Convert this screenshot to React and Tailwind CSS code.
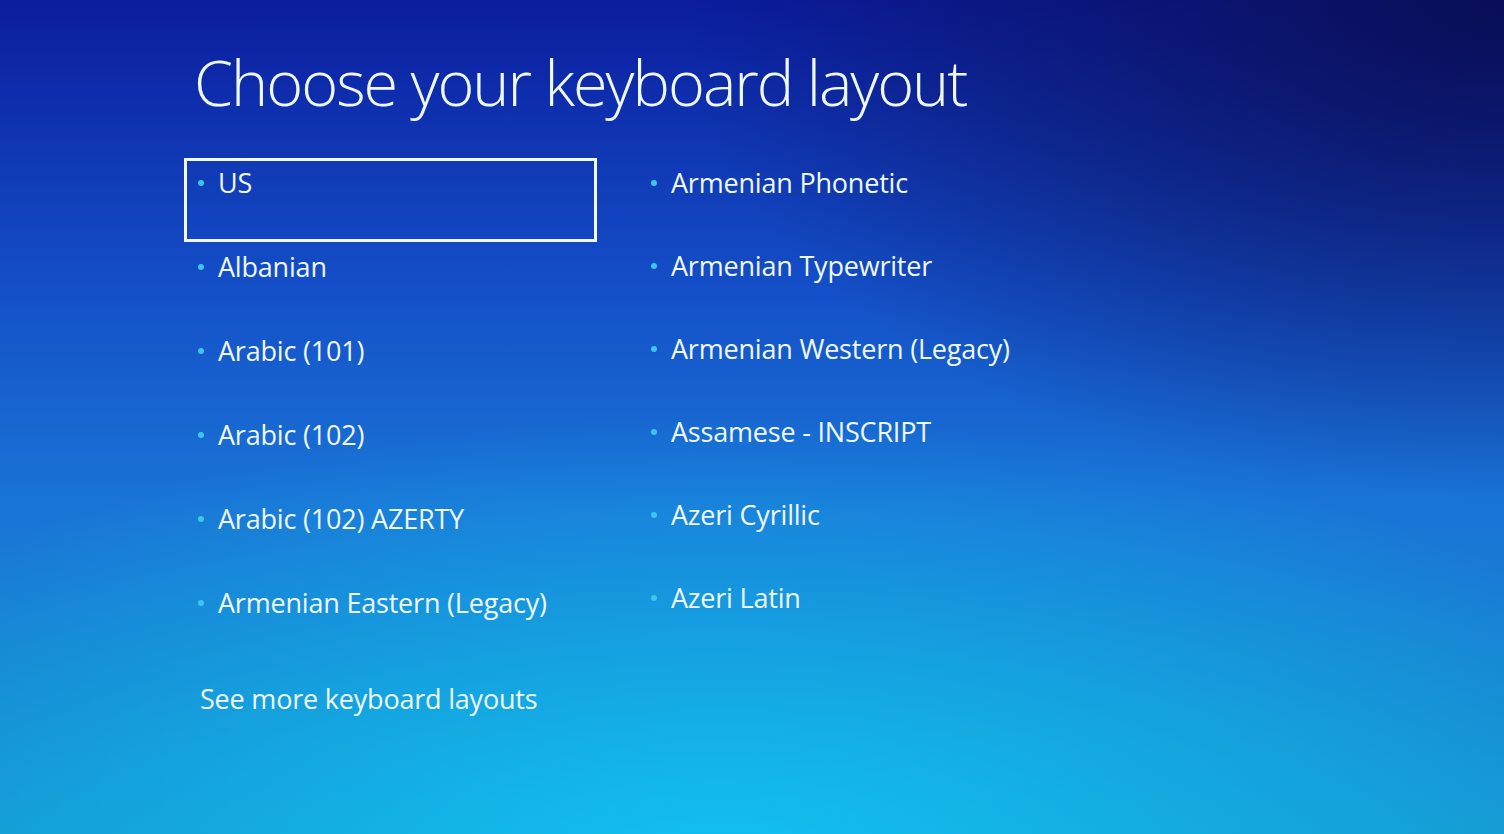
import React from "react";

const leftItems = [
  "Albanian",
  "Arabic (101)",
  "Arabic (102)",
  "Arabic (102) AZERTY",
  "Armenian Eastern (Legacy)",
];

const rightItems = [
  "Armenian Phonetic",
  "Armenian Typewriter",
  "Armenian Western (Legacy)",
  "Assamese - INSCRIPT",
  "Azeri Cyrillic",
  "Azeri Latin",
];

const Item = ({ label, selected, tall }) => (
  <div
    className={
      (tall ? "h-[84px]" : "h-[83px]") +
      " border-[3px] pl-[11px] pt-[4px] " +
      (selected ? "border-[#f2f8ff]" : "border-transparent")
    }
  >
    <div className="flex items-center gap-[14px] text-[27px] leading-[36px] text-[#eef8ff] tracking-[-0.2px]">
      <span className="w-[6px] h-[6px] rounded-full bg-[#3cc6ea] shrink-0" />
      <span>{label}</span>
    </div>
  </div>
);

const App = () => {
  return (
    <div
      className="w-full h-[834px] overflow-hidden bg-[radial-gradient(ellipse_70%_55%_at_48%_105%,#12c2f0_0%,rgba(18,194,240,0)_100%),radial-gradient(ellipse_55%_60%_at_100%_0%,#0a0e56_0%,rgba(10,14,86,0)_100%),linear-gradient(180deg,#0b1c9e_0%,#1450c8_35%,#1a74d6_60%,#1690cc_100%)]"
      style={{ fontFamily: '"Open Sans", "Noto Sans", sans-serif' }}
    >
      <div className="pl-[184px] pt-[40px]">
        <h1 className="pl-[10px] text-[63px] leading-[84px] font-light text-[#eef8ff] tracking-[-2px]">
          Choose your keyboard layout
        </h1>

        <div className="mt-[34px] flex gap-[40px]">
          <div className="w-[413px] flex flex-col">
            <Item label="US" selected tall />
            {leftItems.map((label) => (
              <Item key={label} label={label} tall />
            ))}
            <div className="pl-[16px] pt-[19px] text-[27px] leading-[36px] text-[#eef8ff] tracking-[-0.2px]">
              See more keyboard layouts
            </div>
          </div>

          <div className="flex flex-col">
            {rightItems.map((label) => (
              <Item key={label} label={label} />
            ))}
          </div>
        </div>
      </div>
    </div>
  );
};

export default App;
